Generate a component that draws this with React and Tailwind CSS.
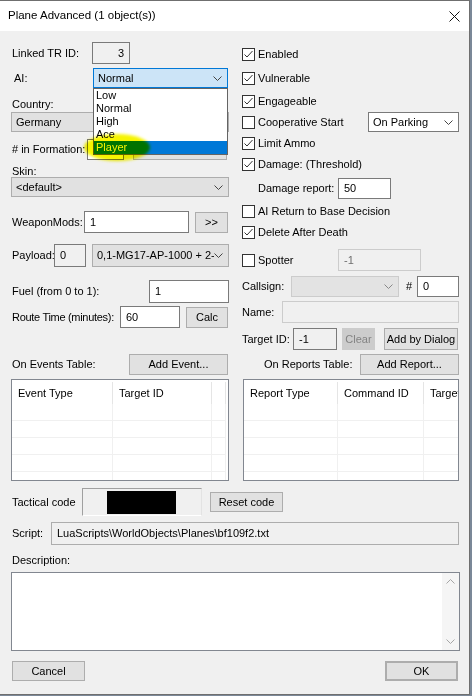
import React from "react";
import clsx from "clsx";

const Chevron = ({ up, color = "#444" }) => (
  <svg width="9" height="5" viewBox="0 0 9 5" className="shrink-0">
    <polyline
      points={up ? "0.5,4.5 4.5,0.5 8.5,4.5" : "0.5,0.5 4.5,4.5 8.5,0.5"}
      fill="none"
      stroke={color}
      strokeWidth="1"
    />
  </svg>
);

const Check = ({ checked }) => (
  <div className="w-[13px] h-[13px] shrink-0 bg-white border border-[#333]">
    {checked && (
      <svg width="11" height="11" viewBox="0 0 11 11">
        <polyline points="1.5,5.5 4,8 9.5,2" fill="none" stroke="#333" strokeWidth="1" />
      </svg>
    )}
  </div>
);

const CheckRow = ({ checked, label, className }) => (
  <div className={clsx("flex items-center gap-[3px] h-[14px]", className)}>
    <Check checked={checked} />
    <span>{label}</span>
  </div>
);

const Field = ({ className, children, tone = "white" }) => (
  <div
    className={clsx(
      "h-full shrink-0 flex items-center px-[5px] border overflow-hidden",
      tone === "white" && "bg-white border-[#7a7a7a]",
      tone === "ro" && "bg-[#f0f0f0] border-[#7a7a7a]",
      tone === "off" && "bg-[#f0f0f0] border-[#cccccc] text-[#6d6d6d]",
      className
    )}
  >
    {children}
  </div>
);

const Combo = ({ className, text, tone = "grey" }) => (
  <div
    className={clsx(
      "h-full shrink-0 flex items-center pl-[4px] pr-[5px] border",
      tone === "grey" && "bg-[#e1e1e1] border-[#adadad]",
      tone === "white" && "bg-white border-[#7a7a7a]",
      tone === "focus" && "bg-[#cce4f7] border-[#0078d7]",
      tone === "off" && "bg-[#e3e3e3] border-[#cccccc]",
      className
    )}
  >
    <span className="flex-1 overflow-hidden">{text}</span>
    <Chevron color={tone === "off" ? "#888" : "#444"} />
  </div>
);

const Btn = ({ className, children, off, focus }) => (
  <div
    className={clsx(
      "shrink-0 flex items-center justify-center",
      off
        ? "bg-[#cccccc] border border-[#cccccc] text-[#838383]"
        : "bg-[#e1e1e1] border border-[#adadad]",
      focus && "border-2 border-[#0078d7]",
      className
    )}
  >
    {children}
  </div>
);

const Table = ({ cols, className }) => (
  <div className={clsx("border border-[#828790] bg-white overflow-hidden", className)}>
    <div className="flex h-[22px] mt-[2px]">
      {cols.map((c, i) => (
        <div
          key={i}
          className={clsx(
            "h-full shrink-0 flex items-center pl-[6px] border-r border-[#e5e5e5] overflow-hidden",
            c.w
          )}
        >
          {c.label}
        </div>
      ))}
    </div>
    {[0, 1, 2, 3, 4].map((r) => (
      <div key={r} className="flex h-[17px] pr-[2px]">
        {cols.map((c, i) => (
          <div key={i} className={clsx("h-full shrink-0 border-b border-r border-[#f0f0f0]", c.w)} />
        ))}
      </div>
    ))}
  </div>
);

export default function App() {
  return (
    <div className="w-[472px] h-[696px] bg-[#7b8898] font-['Liberation_Sans',Arial,sans-serif] text-[11px] text-black whitespace-nowrap">
      <div className="w-[470px] h-[695px] bg-[#f0f0f0] border-t border-r border-b border-[#6f6f6f] relative">
        {/* title bar */}
        <div className="h-[30px] bg-white flex items-center pl-[8px] pr-[9px]">
          <span className="text-[11.5px]">Plane Advanced (1 object(s))</span>
          <svg width="11" height="11" viewBox="0 0 11 11" className="ml-auto">
            <line x1="0.5" y1="0.5" x2="10.5" y2="10.5" stroke="#111" strokeWidth="1" />
            <line x1="10.5" y1="0.5" x2="0.5" y2="10.5" stroke="#111" strokeWidth="1" />
          </svg>
        </div>

        <div className="pl-[11px]">
          {/* top two columns */}
          <div className="flex gap-[13px]">
            {/* left */}
            <div className="w-[218px]">
              <div className="flex h-[22px] mt-[11px] items-center">
                <span className="w-[81px] shrink-0 pl-[1px]">Linked TR ID:</span>
                <Field tone="ro" className="w-[38px] justify-end">3</Field>
              </div>

              <div className="relative flex h-[20px] mt-[4px] items-center">
                <span className="w-[82px] shrink-0 pl-[3px]">AI:</span>
                <Combo tone="focus" className="w-[135px]" text="Normal" />
                <div className="absolute z-10 top-full left-[82px] w-[135px] bg-white border border-[#646464]">
                  {["Low", "Normal", "High", "Ace"].map((t) => (
                    <div key={t} className="h-[13px] leading-[13px] pl-[2px]">{t}</div>
                  ))}
                  <div className="h-[13px] leading-[13px] pl-[2px] bg-[#0078d7] text-white">Player</div>
                </div>
                <div className="absolute z-20 left-[73px] top-[66px] w-[66px] h-[27px] rounded-[50%] bg-[#f6f400] blur-[1.5px] mix-blend-multiply" />
              </div>

              <div className="mt-[9px] h-[14px] leading-[14px] pl-[1px]">Country:</div>
              <div className="mt-[1px] h-[20px]">
                <Combo className="w-full" text="Germany" />
              </div>

              <div className="flex h-[21px] mt-[7px] items-center">
                <span className="w-[76px] shrink-0 pl-[1px]"># in Formation:</span>
                <Field className="w-[37px]">0</Field>
                <Combo className="w-[94px] ml-[9px]" text="" />
              </div>

              <div className="mt-[6px] h-[11px] leading-[11px] pl-[1px]">Skin:</div>
              <div className="h-[20px]">
                <Combo className="w-full" text="<default>" />
              </div>

              <div className="flex h-[22px] mt-[14px] items-center">
                <span className="w-[73px] shrink-0 pl-[1px]">WeaponMods:</span>
                <Field className="w-[105px]">1</Field>
                <Btn className="w-[33px] h-[21px] ml-[6px]">&gt;&gt;</Btn>
              </div>

              <div className="flex h-[23px] mt-[11px] items-center">
                <span className="w-[43px] shrink-0 pl-[1px]">Payload:</span>
                <Field tone="ro" className="w-[32px]">0</Field>
                <Combo className="w-[137px] ml-[6px] h-[22px]" text="0,1-MG17-AP-1000 + 2-MG151-15" />
              </div>

              <div className="flex h-[23px] mt-[13px] items-center">
                <span className="pl-[1px]">Fuel (from 0 to 1):</span>
                <Field className="w-[80px] ml-auto">1</Field>
              </div>

              <div className="flex h-[22px] mt-[3px] items-center">
                <span className="w-[109px] shrink-0 pl-[1px] tracking-[-0.3px]">Route Time (minutes):</span>
                <Field className="w-[60px]">60</Field>
                <Btn className="w-[42px] h-[21px] ml-[6px]">Calc</Btn>
              </div>
            </div>

            {/* right */}
            <div className="w-[217px]">
              <CheckRow checked label="Enabled" className="mt-[16px]" />
              <CheckRow checked label="Vulnerable" className="mt-[10px]" />
              <CheckRow checked label="Engageable" className="mt-[9px]" />
              <div className="flex h-[20px] mt-[4px] items-center">
                <CheckRow label="Cooperative Start" />
                <Combo tone="white" className="w-[91px] ml-auto" text="On Parking" />
              </div>
              <CheckRow checked label="Limit Ammo" className="mt-[4px]" />
              <CheckRow checked label="Damage: (Threshold)" className="mt-[7px]" />
              <div className="flex h-[21px] mt-[7px] items-center">
                <span className="w-[96px] shrink-0 pl-[16px]">Damage report:</span>
                <Field className="w-[53px]">50</Field>
              </div>
              <CheckRow label="AI Return to Base Decision" className="mt-[5px]" />
              <CheckRow checked label="Delete After Death" className="mt-[7px]" />
              <div className="flex h-[22px] mt-[10px] items-center">
                <div className="w-[96px] shrink-0">
                  <CheckRow label="Spotter" />
                </div>
                <Field tone="off" className="w-[83px]">-1</Field>
              </div>
              <div className="flex h-[21px] mt-[5px] items-center">
                <span className="w-[49px] shrink-0">Callsign:</span>
                <Combo tone="off" className="w-[108px]" text="" />
                <span className="ml-[7px]">#</span>
                <Field className="w-[42px] ml-auto">0</Field>
              </div>
              <div className="flex h-[22px] mt-[4px] items-center">
                <span className="w-[40px] shrink-0">Name:</span>
                <Field tone="off" className="w-[177px] border-[#bcbcbc]" />
              </div>
              <div className="flex h-[22px] mt-[5px] items-center">
                <span className="w-[51px] shrink-0">Target ID:</span>
                <Field tone="ro" className="w-[44px]">-1</Field>
                <Btn off className="w-[33px] h-full ml-[5px]">Clear</Btn>
                <Btn className="w-[74px] h-full ml-[9px]">Add by Dialog</Btn>
              </div>
            </div>
          </div>

          {/* tables */}
          <div className="flex gap-[13px] mt-[4px]">
            <div className="w-[218px]">
              <div className="flex h-[21px] items-center">
                <span className="pl-[1px]">On Events Table:</span>
                <Btn className="w-[99px] h-full ml-auto mr-[1px]">Add Event...</Btn>
              </div>
              <Table
                className="mt-[4px] h-[102px]"
                cols={[
                  { label: "Event Type", w: "w-[101px]" },
                  { label: "Target ID", w: "w-[99px]" },
                  { label: "", w: "w-[14px]" },
                ]}
              />
            </div>
            <div className="w-[217px]">
              <div className="flex h-[21px] items-center">
                <span className="pl-[22px]">On Reports Table:</span>
                <Btn className="w-[99px] h-full ml-auto">Add Report...</Btn>
              </div>
              <Table
                className="mt-[4px] h-[102px] ml-[1px]"
                cols={[
                  { label: "Report Type", w: "w-[94px]" },
                  { label: "Command ID", w: "w-[86px]" },
                  { label: "Target ID", w: "w-[60px]" },
                ]}
              />
            </div>
          </div>

          {/* bottom */}
          <div className="flex h-[28px] mt-[7px] items-center">
            <span className="w-[71px] shrink-0 pl-[1px]">Tactical code</span>
            <div className="w-[120px] h-full flex items-center pl-[24px] bg-[#f0f0f0] border border-t-[#a0a0a0] border-l-[#a0a0a0] border-r-[#e3e3e3] border-b-white">
              <div className="w-[69px] h-[23px] bg-black" />
            </div>
            <Btn className="w-[73px] h-[20px] ml-[8px]">Reset code</Btn>
          </div>

          <div className="flex h-[23px] mt-[6px] items-center">
            <span className="w-[40px] shrink-0 pl-[1px]">Script:</span>
            <Field tone="ro" className="w-[408px] border-[#adadad]">
              LuaScripts\WorldObjects\Planes\bf109f2.txt
            </Field>
          </div>

          <div className="mt-[9px] h-[12px] leading-[12px] pl-[1px]">Description:</div>

          <div className="mt-[6px] w-[449px] h-[79px] bg-white border border-[#828790] flex justify-end">
            <div className="w-[17px] h-full bg-[#f5f5f5] flex flex-col items-center justify-between py-[6px]">
              <Chevron up color="#a6a6a6" />
              <Chevron color="#a6a6a6" />
            </div>
          </div>

          <div className="flex h-[20px] mt-[10px] w-[449px]">
            <Btn className="w-[73px] h-full ml-[1px]">Cancel</Btn>
            <Btn focus className="w-[73px] h-full ml-auto mr-[2px]">OK</Btn>
          </div>
        </div>
      </div>
    </div>
  );
}
